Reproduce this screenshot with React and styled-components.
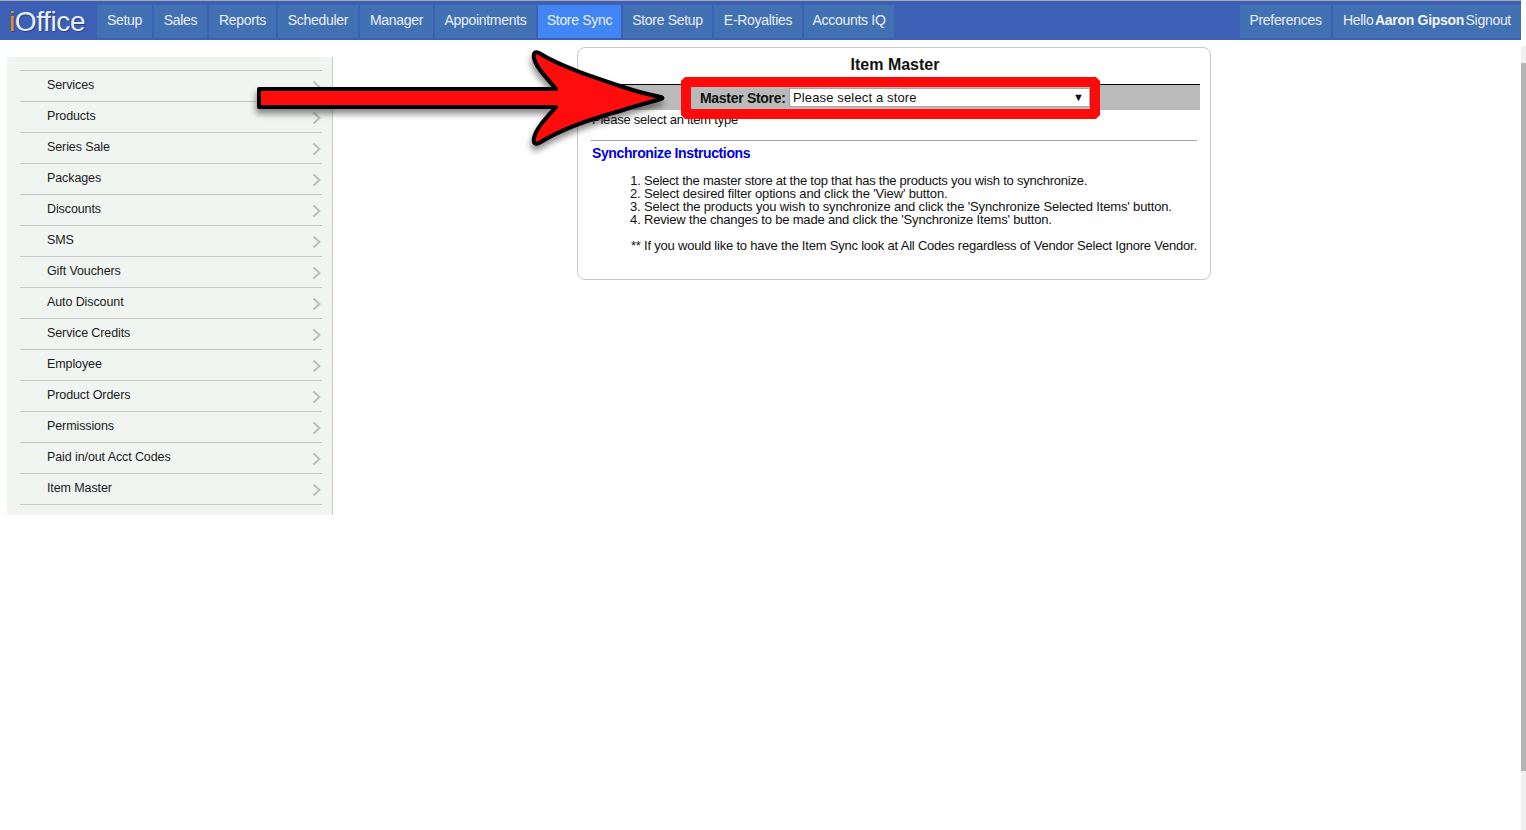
import React from "react";
import styled, { createGlobalStyle } from "styled-components";

const menuItems = [
  { label: "Setup", width: 55 },
  { label: "Sales", width: 53 },
  { label: "Reports", width: 67 },
  { label: "Scheduler", width: 80 },
  { label: "Manager", width: 73 },
  { label: "Appointments", width: 101 },
  { label: "Store Sync", width: 83, active: true },
  { label: "Store Setup", width: 89 },
  { label: "E-Royalties", width: 88 },
  { label: "Accounts IQ", width: 90 },
];

const sideItems = [
  "Services",
  "Products",
  "Series Sale",
  "Packages",
  "Discounts",
  "SMS",
  "Gift Vouchers",
  "Auto Discount",
  "Service Credits",
  "Employee",
  "Product Orders",
  "Permissions",
  "Paid in/out Acct Codes",
  "Item Master",
];

const steps = [
  { text: "Select the master store at the top that has the products you wish to synchronize.", spacing: -0.23 },
  { text: "Select desired filter options and click the 'View' button.", spacing: -0.145 },
  { text: "Select the products you wish to synchronize and click the 'Synchronize Selected Items' button.", spacing: -0.15 },
  { text: "Review the changes to be made and click the 'Synchronize Items' button.", spacing: -0.18 },
];

const App = () => {
  return (
    <>
      <GlobalStyle />
      <Page>
        <TopBar>
          <Logo>
            <span>i</span>Office
          </Logo>
          {menuItems.map((item) => (
            <NavItem key={item.label} width={item.width} active={item.active}>
              {item.label}
            </NavItem>
          ))}
          <RightNav>
            <NavItem width={91}>Preferences</NavItem>
            <NavItem width={188}>
              Hello <b>Aaron Gipson</b> Signout
            </NavItem>
          </RightNav>
        </TopBar>
        <Content>
          <SideMenu>
            {sideItems.map((item) => (
              <SideRow key={item}>
                {item}
                <Chevron viewBox="0 0 9 14">
                  <path d="M1.5 1.5L7.5 7L1.5 12.5" />
                </Chevron>
              </SideRow>
            ))}
          </SideMenu>
          <Panel>
            <Title>Item Master</Title>
            <FilterBar>
              <FilterLabel>Master Store:</FilterLabel>
              <StoreSelect>
                Please select a store
                <Caret>▼</Caret>
              </StoreSelect>
            </FilterBar>
            <Hint>Please select an item type</Hint>
            <Divider />
            <Heading>Synchronize Instructions</Heading>
            <Steps>
              {steps.map((step) => (
                <Step key={step.text} spacing={step.spacing}>
                  {step.text}
                </Step>
              ))}
            </Steps>
            <Note>
              ** If you would like to have the Item Sync look at All Codes regardless of Vendor Select
              Ignore Vendor.
            </Note>
            <RedBox />
          </Panel>
        </Content>
        <BigArrow viewBox="0 0 420 110">
          <defs>
            <filter id="arrowShadow" x="-5%" y="-10%" width="110%" height="130%">
              <feDropShadow dx="-1" dy="5" stdDeviation="3" floodColor="#000" floodOpacity="0.45" />
            </filter>
          </defs>
          <path
            d="M4 43 L301 43 C292 32 281 22 279 12 C278 7 280 5 284 7 C305 20 335 30 365 40 C380 45 395 49 406 51 Q409 52 406 53 C395 56 380 60 365 65 C335 73 305 84 284 97 C280 99 278 97 279 92 C281 82 292 71 301 61 L4 61 Z"
            fill="#ff0a0a"
            stroke="#000"
            strokeWidth="4"
            strokeLinejoin="round"
            filter="url(#arrowShadow)"
          />
        </BigArrow>
        <ScrollTrack>
          <ScrollThumb />
        </ScrollTrack>
      </Page>
    </>
  );
};

const GlobalStyle = createGlobalStyle`
  html, body {
    margin: 0;
    height: 100%;
    overflow: hidden;
    background: #fff;
  }
  body {
    font-family: "Liberation Sans", Arial, sans-serif;
  }
`;

const Page = styled.div`
  position: relative;
  width: 1526px;
  height: 830px;
  overflow: hidden;
`;

const TopBar = styled.div`
  display: flex;
  align-items: stretch;
  gap: 2px;
  height: 33px;
  width: 1521px;
  padding: 4px 0 2px;
  border-top: 1px solid #a9a9a9;
  background: #3b60b6;
`;

const Logo = styled.div`
  width: 86px;
  padding-left: 9px;
  margin-top: -2px;
  font-size: 28px;
  line-height: 38px;
  letter-spacing: -0.4px;
  color: #e8eef8;
  text-shadow: 1px 1px 1px #26407c;

  span {
    color: #f28c1e;
  }
`;

const NavItem = styled.div`
  display: flex;
  flex: none;
  align-items: center;
  justify-content: center;
  width: ${(props) => props.width}px;
  padding-bottom: 3px;
  box-sizing: border-box;
  font-size: 14px;
  letter-spacing: -0.3px;
  white-space: pre;
  color: #e9eff9;
  background: ${(props) => (props.active ? "#4285f4" : "#4170b3")};

  b {
    margin: 0 -2px;
    color: #f1f5fb;
  }
`;

const RightNav = styled.div`
  display: flex;
  gap: 2px;
  margin-left: auto;
`;

const Content = styled.div`
  display: flex;
  align-items: flex-start;
`;

const SideMenu = styled.div`
  flex: none;
  width: 302px;
  margin: 17px 0 0 7px;
  padding: 13px 10px 10px 13px;
  border-right: 1px solid #c8cbc9;
  background: #f1f5f2;
`;

const SideRow = styled.div`
  position: relative;
  height: 30px;
  padding-left: 27px;
  border-top: 1px solid #c8c8c8;
  font-size: 12.5px;
  line-height: 28px;
  letter-spacing: -0.1px;
  color: #1a1a1a;

  &:last-child {
    border-bottom: 1px solid #c8c8c8;
  }
`;

const Chevron = styled.svg`
  position: absolute;
  right: 1px;
  top: 9px;
  width: 9px;
  height: 14px;
  fill: none;
  stroke: #b9bcba;
  stroke-width: 1.8;
`;

const Panel = styled.div`
  position: relative;
  flex: none;
  width: 610px;
  height: 231px;
  margin: 7px 0 0 244px;
  padding: 0 10px 0 12px;
  border: 1px solid #c9c9c9;
  border-radius: 8px;
`;

const Title = styled.div`
  height: 36px;
  font-size: 16px;
  font-weight: bold;
  line-height: 33px;
  text-align: center;
  color: #111;
`;

const FilterBar = styled.div`
  display: flex;
  align-items: center;
  width: 610px;
  height: 26px;
  padding-left: 110px;
  border-top: 1px solid #000;
  box-sizing: border-box;
  background: #bababa;
`;

const FilterLabel = styled.div`
  width: 89px;
  font-size: 14px;
  font-weight: bold;
  letter-spacing: -0.3px;
  white-space: nowrap;
  color: #111;
`;

const StoreSelect = styled.div`
  position: relative;
  z-index: 2;
  width: 296px;
  height: 17px;
  padding-left: 3px;
  border: 1px solid #a6a6a6;
  font-size: 13px;
  line-height: 18px;
  letter-spacing: 0.14px;
  color: #111;
  background: #fff;
`;

const Caret = styled.span`
  position: absolute;
  right: 5px;
  top: -1px;
  font-size: 11px;
  color: #111;
`;

const Hint = styled.div`
  margin-top: 2px;
  padding-left: 2px;
  font-size: 13px;
  line-height: 15px;
  letter-spacing: -0.22px;
  color: #111;
`;

const Divider = styled.div`
  width: 606px;
  margin: 13px 0 0 1px;
  border-top: 1px solid #a3a3a3;
`;

const Heading = styled.div`
  margin-top: 5px;
  padding-left: 2px;
  font-size: 14px;
  font-weight: bold;
  line-height: 15px;
  letter-spacing: -0.38px;
  color: #0000e6;
`;

const Steps = styled.ol`
  margin: 13px 0 0;
  padding: 0 0 0 54px;
  font-size: 13px;
  line-height: 13px;
  color: #111;
`;

const Step = styled.li`
  letter-spacing: ${(props) => props.spacing}px;
`;

const Note = styled.div`
  margin-top: 13px;
  padding-left: 41px;
  font-size: 13px;
  line-height: 13px;
  letter-spacing: -0.21px;
  white-space: nowrap;
  color: #111;
`;

const RedBox = styled.div`
  position: absolute;
  left: 103px;
  top: 29px;
  width: 399px;
  height: 22px;
  border: 10px solid #ff0a0a;
  clip-path: polygon(
    4px 0,
    calc(100% - 4px) 0,
    100% 4px,
    100% calc(100% - 4px),
    calc(100% - 4px) 100%,
    4px 100%,
    0 calc(100% - 4px),
    0 4px
  );
`;

const BigArrow = styled.svg`
  position: absolute;
  left: 255px;
  top: 46px;
  width: 420px;
  height: 110px;
  overflow: visible;
`;

const ScrollTrack = styled.div`
  position: absolute;
  right: 0;
  top: 46px;
  bottom: 0;
  width: 5px;
  background: #f0f0f0;
`;

const ScrollThumb = styled.div`
  height: 708px;
  margin-top: 17px;
  background: #b5b5b5;
`;

export default App;
